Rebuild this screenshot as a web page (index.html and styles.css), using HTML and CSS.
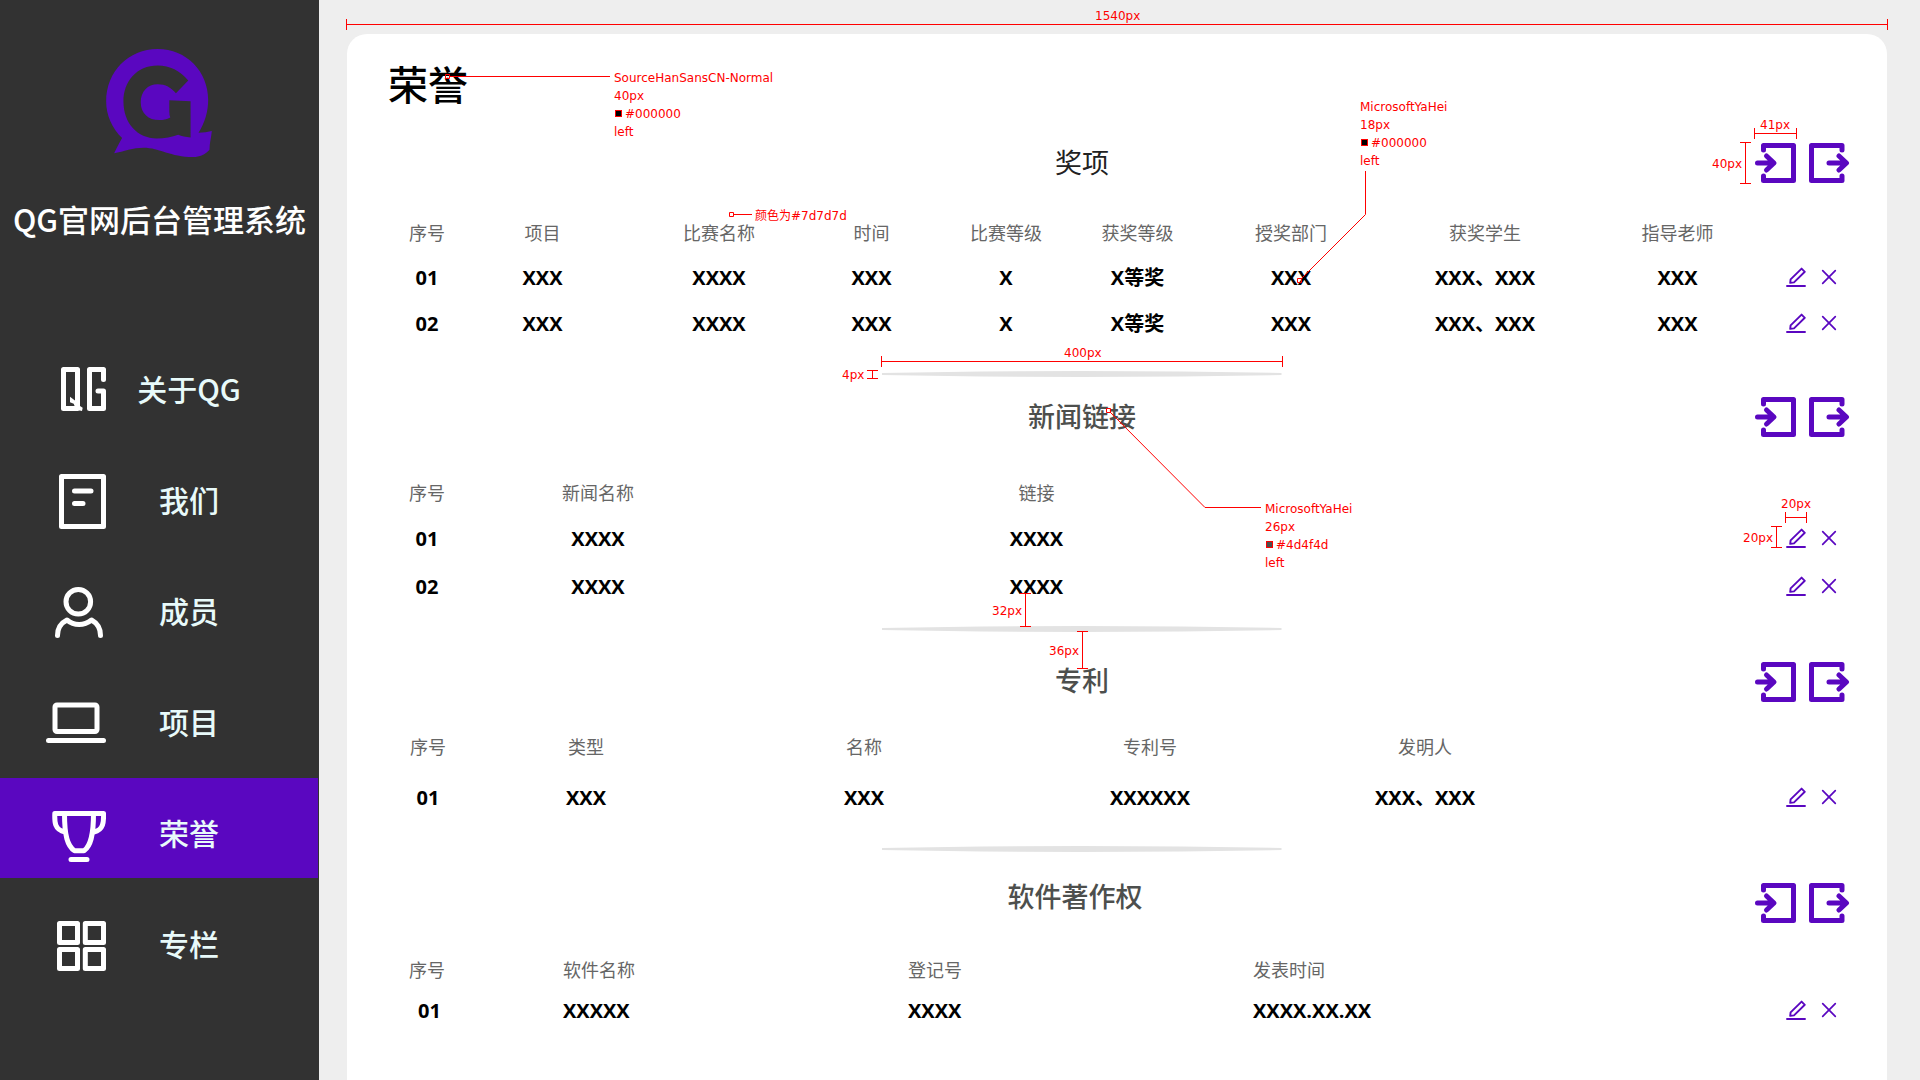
FILE: index.html
```html
<!DOCTYPE html>
<html lang="zh-CN">
<head>
<meta charset="utf-8">
<title>QG官网后台管理系统</title>
<link rel="stylesheet" href="styles.css">
</head>
<body>
<svg class="sprite" aria-hidden="true">
  <symbol id="import" viewBox="0 0 41 40">
    <path d="M8.5 7V2.5H38.5V37.5H8.5V33" fill="none" stroke="currentColor" stroke-width="5" stroke-linecap="round" stroke-linejoin="round"/>
    <path d="M2.5 20H17M11.5 13L19 20L11.5 27" fill="none" stroke="currentColor" stroke-width="5" stroke-linecap="round" stroke-linejoin="round"/>
  </symbol>
  <symbol id="export" viewBox="0 0 41 40">
    <path d="M33 7V2.5H2.5V37.5H33V33" fill="none" stroke="currentColor" stroke-width="5" stroke-linecap="round" stroke-linejoin="round"/>
    <path d="M20 20H35M30 13L37.5 20L30 27" fill="none" stroke="currentColor" stroke-width="5" stroke-linecap="round" stroke-linejoin="round"/>
  </symbol>
  <symbol id="edit" viewBox="0 0 20 20">
    <path d="M1 19H19M15.6 1.6L18.8 4.8L8 15.4L4.2 15.8L4.6 12.4Z" fill="none" stroke="currentColor" stroke-width="1.9" stroke-linecap="round" stroke-linejoin="round"/>
  </symbol>
  <symbol id="delete" viewBox="0 0 20 20">
    <path d="M3.7 3.7L16.3 16.3M16.3 3.7L3.7 16.3" fill="none" stroke="currentColor" stroke-width="1.7" stroke-linecap="round"/>
  </symbol>
</svg>

<aside class="sidebar">
  <svg class="logo" viewBox="318 147 318 325" role="img" aria-label="QG">
    <path fill-rule="evenodd" d="M366 415C335 385 318 345 318 305C318 215 385 147 473 147C560 147 625 215 625 300C625 335 615 370 596 399Q618 399 636 394C634 415 629 430 629 450C615 465 600 472 580 472C510 472 480 444 430 444C400 444 370 455 342 461C350 445 357 430 366 415ZM565 242C540 213 510 197 473 197C410 197 370 245 370 305C370 370 412 416 470 416C495 416 515 412 535 405C545 410 558 412 572 413L572 304L508 301L508 335Q508 345 511 353C500 359 490 361 478 361C445 361 422 340 422 307C422 275 443 253 473 253C497 253 513 263 528 280Z"/>
  </svg>
  <p class="brand">QG官网后台管理系统</p>
  <nav class="nav">
    <a class="nav-item" href="#about">
      <svg class="nav-icon" viewBox="0 0 60 60"><path d="M17.500 9.500H31.500V48.500H17.500ZM57.500 19.500V9.500H43.500V48.500H57.500V31H52"/><path class="solid" d="M24 36.700L29.300 40.700L34 46L36.700 47.700L36 51L32.700 50.300L29.300 47.700L27.700 43.700L24 42.300Z"/></svg>
      <span class="nav-label">关于QG</span>
    </a>
    <a class="nav-item" href="#us">
      <svg class="nav-icon" viewBox="0 0 60 60"><path d="M15.500 5.500H57.500V55.500H15.500ZM28.500 20H45M28.500 32.500H37"/></svg>
      <span class="nav-label">我们</span>
    </a>
    <a class="nav-item" href="#members">
      <svg class="nav-icon" viewBox="0 0 60 60"><circle cx="32.300" cy="19.800" r="12.300"/><path d="M11.500 53.500C11.500 47 15 41 21 38C28 44 38 44 45.500 38C51 41 54.500 47 54.500 53.500"/></svg>
      <span class="nav-label">成员</span>
    </a>
    <a class="nav-item" href="#projects">
      <svg class="nav-icon" viewBox="0 0 60 60"><rect x="9" y="12" width="42" height="26.500" rx="2"/><path d="M2.500 47.500H57.500"/></svg>
      <span class="nav-label">项目</span>
    </a>
    <a class="nav-item active" href="#honors" aria-current="page">
      <svg class="nav-icon" viewBox="0 0 60 60"><path d="M8.800 9.500H57.500M8.800 9.500C8.500 18 8.500 26 19 28M57.500 9.500C57.800 18 57.500 26 48 28M18.500 9.500C18.500 32 21.500 42 28.500 46.800H38C44.500 42 47.500 32 47.500 9.500M25 55.500H41"/></svg>
      <span class="nav-label">荣誉</span>
    </a>
    <a class="nav-item" href="#columns">
      <svg class="nav-icon" viewBox="0 0 60 60"><path d="M13.500 8.500H31.500V27.500H13.500ZM39.300 8.500H57.500V27.500H39.300ZM13.500 34.500H31.500V53.500H13.500ZM39.300 34.500H57.500V53.500H39.300Z"/></svg>
      <span class="nav-label">专栏</span>
    </a>
  </nav>
</aside>

<main class="card">
  <h1 class="page-title">荣誉</h1>

  <section class="awards">
    <header class="section-head">
      <h2 class="section-title strong">奖项</h2>
      <div class="transfer">
        <button class="transfer-btn" type="button" aria-label="导入"><svg><use href="#import"/></svg></button>
        <button class="transfer-btn" type="button" aria-label="导出"><svg><use href="#export"/></svg></button>
      </div>
    </header>
    <table>
      <colgroup><col class="w88"><col class="w143"><col class="w210"><col class="w95"><col class="w174"><col class="w89"><col class="w218"><col class="w170"><col class="w215"><col></colgroup>
      <thead><tr><th>序号</th><th>项目</th><th>比赛名称</th><th>时间</th><th>比赛等级</th><th>获奖等级</th><th>授奖部门</th><th>获奖学生</th><th>指导老师</th><td></td></tr></thead>
      <tbody>
        <tr><td>01</td><td>XXX</td><td>XXXX</td><td>XXX</td><td>X</td><td>X等奖</td><td>XXX</td><td>XXX、XXX</td><td>XXX</td>
          <td><div class="actions"><button class="action" type="button" aria-label="编辑"><svg><use href="#edit"/></svg></button><button class="action" type="button" aria-label="删除"><svg><use href="#delete"/></svg></button></div></td></tr>
        <tr><td>02</td><td>XXX</td><td>XXXX</td><td>XXX</td><td>X</td><td>X等奖</td><td>XXX</td><td>XXX、XXX</td><td>XXX</td>
          <td><div class="actions"><button class="action" type="button" aria-label="编辑"><svg><use href="#edit"/></svg></button><button class="action" type="button" aria-label="删除"><svg><use href="#delete"/></svg></button></div></td></tr>
      </tbody>
    </table>
    <hr class="divider">
  </section>

  <section class="news">
    <header class="section-head">
      <h2 class="section-title">新闻链接</h2>
      <div class="transfer">
        <button class="transfer-btn" type="button" aria-label="导入"><svg><use href="#import"/></svg></button>
        <button class="transfer-btn" type="button" aria-label="导出"><svg><use href="#export"/></svg></button>
      </div>
    </header>
    <table>
      <colgroup><col class="w88"><col class="w254"><col class="w623"><col></colgroup>
      <thead><tr><th>序号</th><th>新闻名称</th><th>链接</th><td></td></tr></thead>
      <tbody>
        <tr><td>01</td><td>XXXX</td><td>XXXX</td>
          <td><div class="actions"><button class="action" type="button" aria-label="编辑"><svg><use href="#edit"/></svg></button><button class="action" type="button" aria-label="删除"><svg><use href="#delete"/></svg></button></div></td></tr>
        <tr><td>02</td><td>XXXX</td><td>XXXX</td>
          <td><div class="actions"><button class="action" type="button" aria-label="编辑"><svg><use href="#edit"/></svg></button><button class="action" type="button" aria-label="删除"><svg><use href="#delete"/></svg></button></div></td></tr>
      </tbody>
    </table>
    <hr class="divider">
  </section>

  <section class="patents">
    <header class="section-head">
      <h2 class="section-title">专利</h2>
      <div class="transfer">
        <button class="transfer-btn" type="button" aria-label="导入"><svg><use href="#import"/></svg></button>
        <button class="transfer-btn" type="button" aria-label="导出"><svg><use href="#export"/></svg></button>
      </div>
    </header>
    <table>
      <colgroup><col class="w90"><col class="w226"><col class="w330"><col class="w242"><col class="w308"><col></colgroup>
      <thead><tr><th>序号</th><th>类型</th><th>名称</th><th>专利号</th><th>发明人</th><td></td></tr></thead>
      <tbody>
        <tr><td>01</td><td>XXX</td><td>XXX</td><td>XXXXXX</td><td>XXX、XXX</td>
          <td><div class="actions"><button class="action" type="button" aria-label="编辑"><svg><use href="#edit"/></svg></button><button class="action" type="button" aria-label="删除"><svg><use href="#delete"/></svg></button></div></td></tr>
      </tbody>
    </table>
    <hr class="divider">
  </section>

  <section class="software">
    <header class="section-head">
      <h2 class="section-title">软件著作权</h2>
      <div class="transfer">
        <button class="transfer-btn" type="button" aria-label="导入"><svg><use href="#import"/></svg></button>
        <button class="transfer-btn" type="button" aria-label="导出"><svg><use href="#export"/></svg></button>
      </div>
    </header>
    <table>
      <colgroup><col class="w154"><col class="w345"><col class="w345"><col class="w345"><col></colgroup>
      <thead><tr><th>序号</th><th>软件名称</th><th>登记号</th><th>发表时间</th><td></td></tr></thead>
      <tbody>
        <tr><td class="seq">01</td><td>XXXXX</td><td>XXXX</td><td>XXXX.XX.XX</td>
          <td><div class="actions"><button class="action" type="button" aria-label="编辑"><svg><use href="#edit"/></svg></button><button class="action" type="button" aria-label="删除"><svg><use href="#delete"/></svg></button></div></td></tr>
      </tbody>
    </table>
  </section>
</main>

<!-- Design annotations laid over the page -->
<div class="notes">
  <svg class="note-lines" viewBox="0 0 1920 1080">
    <path d="M346.500 24.500H1887.500M346.500 19V30M1887.500 19V30"/>
    <path d="M450 76.500H610M445.500 74.500H449.500V78.500H445.500Z"/>
    <path d="M734 214.500H752M729.500 212.500H733.500V216.500H729.500Z"/>
    <path d="M1365.500 171V214.500L1301 279M1297.500 278.500H1301.500V282.500H1297.500Z"/>
    <path d="M1110 412L1205 507.500H1261M1106.500 408.500H1110.500V412.500H1106.500Z"/>
    <path d="M881.500 361.500H1282.500M881.500 356V367M1282.500 356V367"/>
    <path d="M867 370.500H878M867 378.500H878M872.500 370.500V378.500"/>
    <path d="M1754.500 133.500H1796.500M1754.500 128V139M1796.500 128V139"/>
    <path d="M1745.500 142.500V183.500M1740 142.500H1751M1740 183.500H1751"/>
    <path d="M1785.500 517.500H1806.500M1785.500 512V523M1806.500 512V523"/>
    <path d="M1776.500 526.500V547.500M1771 526.500H1782M1771 547.500H1782"/>
    <path d="M1025.500 593.500V626.500M1020 593.500H1031M1020 626.500H1031"/>
    <path d="M1082.500 631.500V668.500M1077 631.500H1088M1077 668.500H1088"/>
  </svg>
  <span class="note n-width">1540px</span>
  <div class="note n-title">SourceHanSansCN-Normal<br>40px<br><i class="chip"></i>#000000<br>left</div>
  <span class="note n-color">颜色为#7d7d7d</span>
  <div class="note n-cell">MicrosoftYaHei<br>18px<br><i class="chip"></i>#000000<br>left</div>
  <div class="note n-heading">MicrosoftYaHei<br>26px<br><i class="chip grey"></i>#4d4f4d<br>left</div>
  <span class="note n-400">400px</span>
  <span class="note n-4">4px</span>
  <span class="note n-41">41px</span>
  <span class="note n-40">40px</span>
  <span class="note n-20w">20px</span>
  <span class="note n-20h">20px</span>
  <span class="note n-32">32px</span>
  <span class="note n-36">36px</span>
</div>
</body>
</html>
```
FILE: styles.css
```css
* { box-sizing: border-box; }

body {
  margin: 0;
  min-height: 100vh;
  display: grid;
  grid-template-columns: 319px 1fr;
  position: relative;
  background: #eeeeee;
  color: #000;
  font-family: "Noto Sans CJK SC", sans-serif;
}

h1, h2, p { margin: 0; font-weight: 400; }

button {
  padding: 0;
  border: 0;
  background: none;
  color: #5a07c0;
  cursor: pointer;
}

button svg { display: block; width: 100%; height: 100%; }

.sprite { position: absolute; width: 0; height: 0; }

/* Sidebar */
.sidebar {
  padding-top: 49px;
  background: #323232;
}

.logo {
  display: block;
  width: 106px;
  height: 108px;
  margin-left: 106px;
  fill: #5a07c0;
}

.brand {
  margin-top: 39px;
  color: #fff;
  font-size: 31px;
  font-weight: 500;
  line-height: 46px;
  text-align: center;
  white-space: nowrap;
}

.nav {
  display: flex;
  flex-direction: column;
  gap: 11px;
  margin: 92px 1px 0 0;
}

.nav-item {
  display: flex;
  align-items: center;
  height: 100px;
  padding: 12px 0 0 46px;
  color: #e8fafa;
  text-decoration: none;
}

.nav-item.active { background: #5a07c0; }

.nav-icon {
  width: 60px;
  height: 60px;
  fill: none;
  stroke: #fff;
  stroke-width: 5;
  stroke-linecap: round;
  stroke-linejoin: round;
}

.nav-icon .solid { fill: #fff; stroke: none; }

.nav-label {
  width: 130px;
  margin-left: 18px;
  padding-bottom: 4px;
  font-size: 30px;
  font-weight: 500;
  line-height: 44px;
  text-align: center;
}

/* Content card */
.card {
  margin: 34px 33px 0 28px;
  padding: 19px 37px 0 36px;
  border-radius: 20px 20px 0 0;
  background: #fff;
}

.page-title {
  padding-left: 5px;
  font-size: 40px;
  font-weight: 500;
  line-height: 60px;
}

.section-head { display: grid; }

.section-title {
  grid-area: 1 / 1;
  padding-right: 69px;
  color: #4d4f4d;
  font-size: 27px;
  font-weight: 500;
  line-height: 38px;
  text-align: center;
}

.section-title.strong { color: #222; font-weight: 400; }

.transfer {
  grid-area: 1 / 1;
  justify-self: end;
  display: flex;
  gap: 13px;
}

.transfer-btn { width: 41px; height: 40px; }

.awards { padding-top: 30px; }
.news { padding-top: 20px; }
.patents { padding-top: 30px; }
.software { padding-top: 31px; }

.awards table { margin: 28px 0 24px; }
.news table { margin: 34px 0 15px; }
.patents table { margin: 23px 0 19px; }
.software table { margin: 25px 0 0; }

.awards tbody tr { height: 46px; }
.news tbody tr { height: 48px; }
.patents tbody tr { height: 58px; }
.software tbody tr { height: 38px; }

.patents .section-title { line-height: 36px; }

.software .section-title {
  padding-right: 83px;
  line-height: 26px;
}

.divider {
  width: 400px;
  height: 6px;
  margin: 0 auto;
  border: 0;
  background: #e3e3e3;
  clip-path: polygon(0 33%, 25% 8%, 50% 0, 75% 8%, 100% 33%, 100% 67%, 75% 92%, 50% 100%, 25% 92%, 0 67%);
  transform: translateX(-35px);
}

/* Tables */
table {
  width: 100%;
  border-collapse: collapse;
  table-layout: fixed;
}

th, td { padding: 0; text-align: center; white-space: nowrap; }

thead tr { height: 44px; }

th {
  padding-bottom: 2px;
  color: #666;
  font-size: 18px;
  font-weight: 400;
  line-height: 26px;
}

td {
  font-family: "Open Sans", "Noto Sans CJK SC", sans-serif;
  font-size: 20px;
  font-weight: 700;
  line-height: 28px;
}

.software th, .software td { padding-left: 26px; text-align: left; }
.software .seq { padding-left: 35px; }

.w88 { width: 88px; }
.w89 { width: 89px; }
.w90 { width: 90px; }
.w95 { width: 95px; }
.w143 { width: 143px; }
.w154 { width: 154px; }
.w170 { width: 170px; }
.w174 { width: 174px; }
.w210 { width: 210px; }
.w215 { width: 215px; }
.w218 { width: 218px; }
.w226 { width: 226px; }
.w242 { width: 242px; }
.w254 { width: 254px; }
.w308 { width: 308px; }
.w330 { width: 330px; }
.w345 { width: 345px; }
.w623 { width: 623px; }

.actions {
  display: flex;
  justify-content: flex-end;
  gap: 13px;
  padding: 0 11px 2px 0;
}

.action { width: 20px; height: 20px; }

/* Annotations */
.notes {
  position: absolute;
  top: 0;
  left: 0;
  color: #f00;
  font-family: "DejaVu Sans", "Noto Sans CJK SC", sans-serif;
  font-size: 12px;
  line-height: 18px;
  pointer-events: none;
}

.note-lines {
  display: block;
  width: 1920px;
  height: 1080px;
  fill: none;
  stroke: #f00;
  stroke-width: 1;
}

.note { position: absolute; white-space: nowrap; }

.chip {
  display: inline-block;
  width: 7px;
  height: 7px;
  margin: 0 3px 1px 1px;
  border: 1px solid #f00;
  background: #000;
}

.chip.grey { background: #4d4f4d; }

.n-width { left: 1095px; top: 7px; }
.n-title { left: 614px; top: 69px; }
.n-color { left: 755px; top: 207px; }
.n-cell { left: 1360px; top: 98px; }
.n-heading { left: 1265px; top: 500px; }
.n-400 { left: 1064px; top: 344px; }
.n-4 { left: 842px; top: 366px; }
.n-41 { left: 1760px; top: 116px; }
.n-40 { left: 1712px; top: 155px; }
.n-20w { left: 1781px; top: 495px; }
.n-20h { left: 1743px; top: 529px; }
.n-32 { left: 992px; top: 602px; }
.n-36 { left: 1049px; top: 642px; }
```
